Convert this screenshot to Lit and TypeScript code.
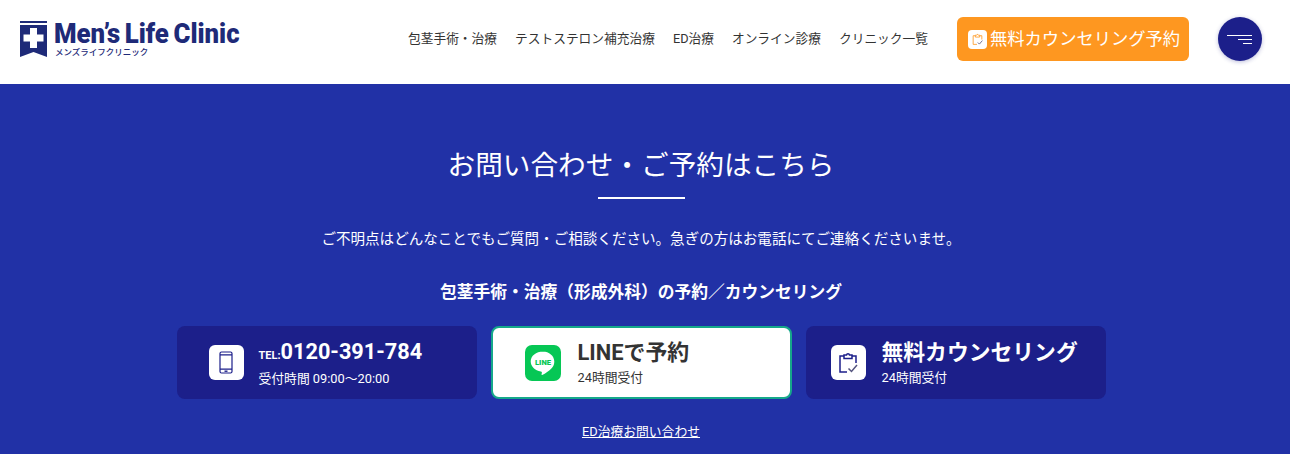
import { LitElement, css, html } from 'lit';
import { customElement } from 'lit/decorators.js';

const phoneIcon = html`<svg width="14" height="23" viewBox="0 0 14 23" fill="none" stroke="#1c1f8a" stroke-width="1.200">
  <rect x="1" y="1" width="12" height="21" rx="1.500"></rect>
  <path d="M1 3.800h12M1 18.200h12"></path>
  <path d="M5.500 20.200h3" stroke-width="1.400"></path>
</svg>`;

const lineIcon = html`<svg width="36" height="36" viewBox="0 0 36 36">
  <rect width="36" height="36" rx="7" fill="#06c755"></rect>
  <path d="M18 6.500c-6.900 0-12.300 4.400-12.300 10 0 5 4.300 9.100 10.100 9.900.4.100.9.300 1 .6.100.3.100.8 0 1.100l-.2 1.100c0 .3-.2 1.200 1 .6 1.300-.5 6.800-4 9.300-6.900 1.700-1.900 2.400-3.800 2.400-6.400 0-5.600-5.400-10-11.300-10z" fill="#fff"></path>
  <text x="18" y="19.500" text-anchor="middle" font-family="Roboto, sans-serif" font-size="7.600" font-weight="900" fill="#06c755">LINE</text>
</svg>`;

const clipboardIcon = (color: string, size: number) => html`<svg width=${size} height=${size} viewBox="0 0 24 24" fill="none" stroke=${color} stroke-width="1.500">
  <path d="M8 5H4v16h7M16 5h4v7"></path>
  <path d="M8 7.500V4h2.500c.2-1.800 2.800-1.800 3 0H16v3.500z"></path>
  <path d="M12.500 17.500l3 3 5.500-6.500" stroke="#55557f"></path>
</svg>`;

@customElement('app-root')
export class AppRoot extends LitElement {
  static styles = css`
    :host {
      display: block;
      height: 454px;
      overflow: hidden;
      font-family: Roboto, 'Noto Sans CJK JP', sans-serif;
      background: #2131a6;
    }

    .header {
      height: 84px;
      box-sizing: border-box;
      background: #fff;
      display: flex;
      align-items: center;
      padding: 0 28px 6px 20px;
    }

    .logo {
      display: flex;
      gap: 7px;
      color: #1e2a78;
      margin-right: auto;
    }

    .logo__name {
      display: block;
      width: 185px;
      font-size: 28px;
      line-height: 25px;
      font-weight: 900;
      word-spacing: -2px;
      white-space: nowrap;
      transform: scaleX(0.92);
      transform-origin: left center;
    }

    .logo__kana {
      display: block;
      margin-top: 1px;
      padding-left: 1px;
      font-size: 8.500px;
      line-height: 11px;
      font-weight: 500;
    }

    .nav {
      display: flex;
      gap: 18px;
      margin: 0 29px 4px 0;
      font-size: 12.720px;
      color: #333;
    }

    .reserve {
      width: 232px;
      height: 44px;
      box-sizing: border-box;
      display: flex;
      align-items: center;
      gap: 3px;
      padding: 0 0 3px 11px;
      border-radius: 6px;
      background: #fe9720;
      color: #fff;
      font-size: 17.300px;
      margin-right: 29px;
      white-space: nowrap;
    }

    .reserve__icon {
      width: 19px;
      height: 19px;
      margin-top: 3px;
      border-radius: 4px;
      background: #fff;
      display: flex;
      align-items: center;
      justify-content: center;
    }

    .menu {
      width: 44px;
      height: 44px;
      border-radius: 50%;
      background: #1c1f8a;
      box-shadow: 0 1px 4px rgba(30, 33, 133, 0.3);
      display: flex;
      flex-direction: column;
      align-items: flex-end;
      justify-content: center;
      gap: 3px;
      padding-right: 10px;
      box-sizing: border-box;
    }

    .menu span {
      display: block;
      height: 1px;
      background: #fff;
    }

    .contact {
      display: flex;
      flex-direction: column;
      align-items: center;
      padding-right: 8px;
      color: #fff;
    }

    .contact__title {
      margin: 64px 0 0;
      font-size: 27.650px;
      line-height: 36px;
      font-weight: 400;
    }

    .contact__rule {
      width: 87px;
      height: 2px;
      background: #fff;
      margin-top: 13px;
    }

    .contact__lead {
      margin: 29px 0 0;
      font-size: 14.560px;
      line-height: 22px;
    }

    .contact__sub {
      margin: 30px 0 0;
      font-size: 16.750px;
      line-height: 24px;
      font-weight: 700;
    }

    .cards {
      display: flex;
      gap: 14px;
      margin-top: 22px;
    }

    .card {
      width: 300px;
      height: 73px;
      box-sizing: border-box;
      border-radius: 8px;
      background: #1c1f8a;
      display: flex;
      align-items: center;
      gap: 15px;
      padding-left: 32px;
    }

    .card--line {
      width: 301px;
      background: #fff;
      border: 2px solid #16a88a;
      color: #333;
      gap: 17px;
    }

    .card--free {
      gap: 16px;
      padding-left: 25px;
    }

    .card__icon {
      width: 35px;
      height: 35px;
      border-radius: 6px;
      background: #fff;
      display: flex;
      align-items: center;
      justify-content: center;
      flex: none;
    }

    .card__main {
      display: block;
      font-size: 21.900px;
      line-height: 30px;
      font-weight: 700;
      white-space: nowrap;
    }

    .card__main--number {
      font-size: 21.700px;
    }

    .card__main--free {
      font-size: 21.800px;
    }

    .card__tel {
      font-size: 11px;
    }

    .card__note {
      display: block;
      font-size: 12.800px;
      line-height: 18px;
      margin-top: -1px;
    }

    .card--line .card__note,
    .card--free .card__note {
      margin-top: 1px;
    }

    .contact__link {
      margin-top: 24px;
      font-size: 12.800px;
      line-height: 18px;
      color: #fff;
      text-decoration: underline;
    }
  `;

  render() {
    return html`
      <header class="header">
        <div class="logo">
          <svg width="27" height="36" viewBox="0 0 27 36">
            <path d="M0 0h27v2H0z" fill="#1e2a78"></path>
            <path d="M0 4h27v32l-13.500-5L0 36z" fill="#1e2a78"></path>
            <path d="M10 7h7v6.500h6.500v7H17V27h-7v-6.500H3.500v-7H10z" fill="#fff"></path>
          </svg>
          <div>
            <span class="logo__name">Men’s Life Clinic</span>
            <span class="logo__kana">メンズライフクリニック</span>
          </div>
        </div>
        <nav class="nav">
          <span>包茎手術・治療</span>
          <span>テストステロン補充治療</span>
          <span>ED治療</span>
          <span>オンライン診療</span>
          <span>クリニック一覧</span>
        </nav>
        <div class="reserve">
          <span class="reserve__icon">${clipboardIcon('#fe9720', 13)}</span>
          無料カウンセリング予約
        </div>
        <div class="menu">
          <span style="width: 25px"></span>
          <span style="width: 14px"></span>
          <span style="width: 9px"></span>
        </div>
      </header>
      <section class="contact">
        <h2 class="contact__title">お問い合わせ・ご予約はこちら</h2>
        <div class="contact__rule"></div>
        <p class="contact__lead">ご不明点はどんなことでもご質問・ご相談ください。急ぎの方はお電話にてご連絡くださいませ。</p>
        <p class="contact__sub">包茎手術・治療（形成外科）の予約／カウンセリング</p>
        <div class="cards">
          <div class="card">
            <span class="card__icon">${phoneIcon}</span>
            <div>
              <span class="card__main card__main--number"><span class="card__tel">TEL:</span>0120-391-784</span>
              <span class="card__note">受付時間 09:00〜20:00</span>
            </div>
          </div>
          <div class="card card--line">
            ${lineIcon}
            <div>
              <span class="card__main">LINEで予約</span>
              <span class="card__note">24時間受付</span>
            </div>
          </div>
          <div class="card card--free">
            <span class="card__icon">${clipboardIcon('#1c1f8a', 24)}</span>
            <div>
              <span class="card__main card__main--free">無料カウンセリング</span>
              <span class="card__note">24時間受付</span>
            </div>
          </div>
        </div>
        <span class="contact__link">ED治療お問い合わせ</span>
      </section>
    `;
  }
}
